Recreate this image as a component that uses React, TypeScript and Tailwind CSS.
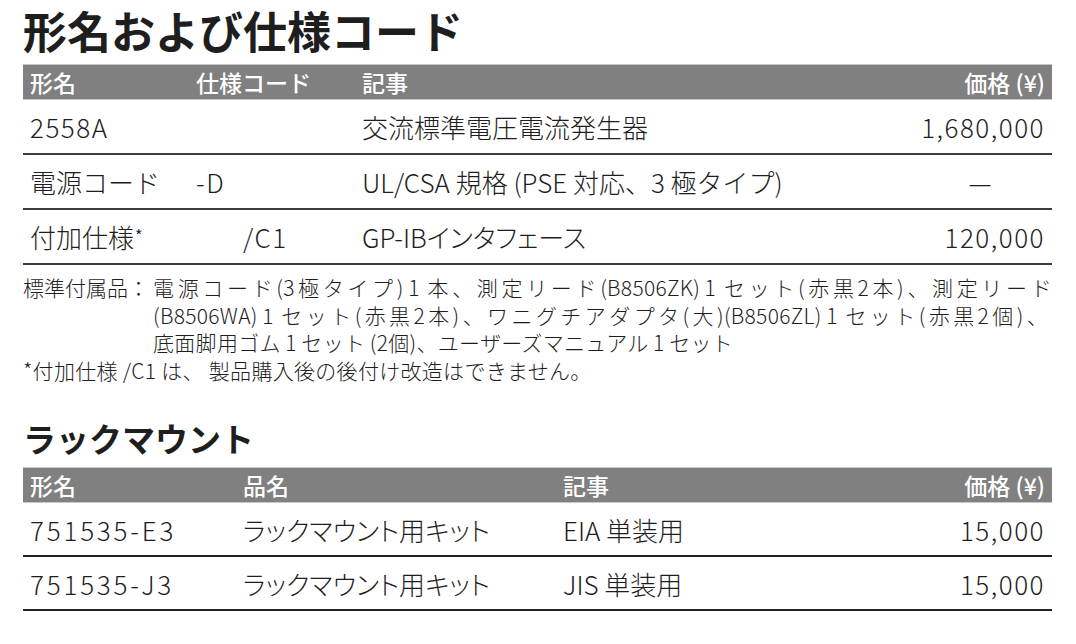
const font = { fontFamily: '"Noto Sans CJK JP", "Noto Sans", sans-serif' };

type Row1 = { model: React.ReactNode; code: React.ReactNode; note: React.ReactNode; price: React.ReactNode };

const specRows: Row1[] = [
  { model: <span className="tracking-[1.5px]">2558A</span>, code: "", note: "交流標準電圧電流発生器", price: "1,680,000" },
  {
    model: "電源コード",
    code: <span className="tracking-[1.5px]">-D</span>,
    note: "UL/CSA 規格 (PSE 対応、3 極タイプ)",
    price: <span className="pr-[52px]">—</span>,
  },
  {
    model: (
      <>
        付加仕様<sup className="text-[16px] font-normal relative -top-[6px] ml-[1px]">*</sup>
      </>
    ),
    code: <span className="pl-[47px] tracking-[1.5px]">/C1</span>,
    note: <span className="[font-feature-settings:'palt']">GP-IBインタフェース</span>,
    price: "120,000",
  },
];

const rackRows = [
  { model: "751535-E3", name: "ラックマウント用キット", note: "EIA 単装用", price: "15,000" },
  { model: "751535-J3", name: "ラックマウント用キット", note: "JIS 単装用", price: "15,000" },
];

function HeaderBar({ cols, cells }: { cols: string; cells: string[] }) {
  return (
    <div
      className={`grid ${cols} items-center h-[36px] bg-[#808080] border-y border-[#c8c8c8] px-[7px] text-white text-[23px] font-medium`}
    >
      {cells.map((c, i) => (
        <div key={i} className={i === cells.length - 1 ? "text-right" : ""}>
          {c}
        </div>
      ))}
    </div>
  );
}

export default function App() {
  return (
    <div className="w-[1076px] h-[644px] bg-white text-[#1e1e1e] pl-[23px] pr-[24px]" style={font}>
      <h1 className="text-[44px] font-bold leading-[60px] pb-[4px]">形名および仕様コード</h1>

      <HeaderBar cols="grid-cols-[166px_166px_1fr_auto]" cells={["形名", "仕様コード", "記事", "価格 (¥)"]} />
      {specRows.map((r, i) => (
        <div
          key={i}
          className="grid grid-cols-[166px_166px_1fr_auto] items-center h-[55px] border-b-2 border-[#3c3c3c] px-[7px] text-[26px] font-light"
        >
          <div>{r.model}</div>
          <div>{r.code}</div>
          <div>{r.note}</div>
          <div className="text-right tracking-[1.5px]">{r.price}</div>
        </div>
      ))}

      <div className="mt-[9px] text-[21px] leading-[27.5px] tracking-[0.3px] font-light">
        <div className="flex">
          <div className="w-[130px] shrink-0 tracking-normal">標準付属品：</div>
          <div className="flex-1">
            <div className="text-justify [text-align-last:justify]">
              電源コード(3極タイプ)&thinsp;1&thinsp;本、測定リード(B8506ZK)&thinsp;1&thinsp;セット(赤黒2本)、測定リード
            </div>
            <div className="text-justify [text-align-last:justify] pr-[4px]">
              (B8506WA)&thinsp;1&thinsp;セット(赤黒2本)、ワニグチアダプタ(大)(B8506ZL)&thinsp;1&thinsp;セット(赤黒2個)、
            </div>
            <div>底面脚用ゴム&thinsp;1&thinsp;セット&thinsp;(2個)、ユーザーズマニュアル&thinsp;1&thinsp;セット</div>
          </div>
        </div>
        <div>*付加仕様 /C1 は、 製品購入後の後付け改造はできません。</div>
      </div>

      <h2 className="mt-[30px] text-[33px] font-bold leading-[48px] h-[53px]">ラックマウント</h2>

      <HeaderBar cols="grid-cols-[213px_320px_1fr_auto]" cells={["形名", "品名", "記事", "価格 (¥)"]} />
      {rackRows.map((r, i) => (
        <div
          key={i}
          className="grid grid-cols-[213px_320px_1fr_auto] items-center h-[54px] border-b-2 border-[#222] px-[7px] text-[26px] font-light"
        >
          <div className="tracking-[2.8px]">{r.model}</div>
          <div className="[font-feature-settings:'palt']">{r.name}</div>
          <div>{r.note}</div>
          <div className="text-right tracking-[1.5px]">{r.price}</div>
        </div>
      ))}
    </div>
  );
}
